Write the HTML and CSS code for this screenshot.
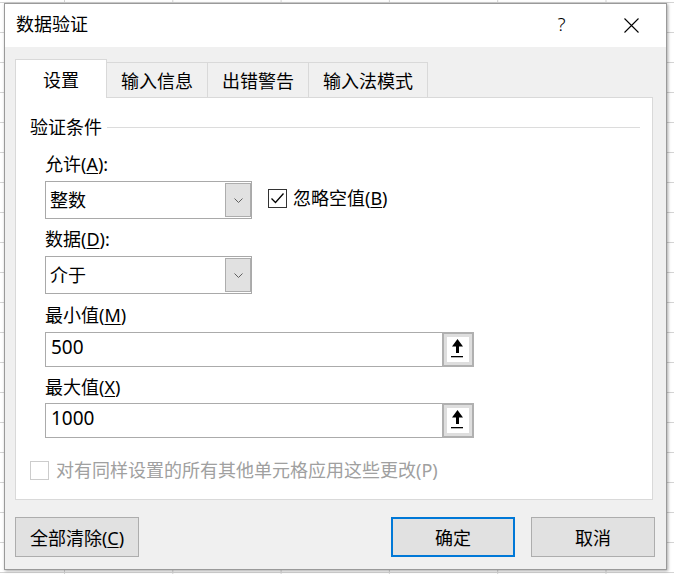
FILE: index.html
```html
<!DOCTYPE html>
<html lang="zh-CN">
<head>
  <meta charset="UTF-8" />
  <title>数据验证</title>
  <link rel="stylesheet" href="styles.css">
</head>
<body>

  <div class="dialog">
    <!-- title bar -->
    <div class="title-bar">
      <span class="title">数据验证</span>
      <span class="title-btn help">?</span>
      <span class="title-btn close">
        <svg width="15" height="15" viewBox="0 0 15 15">
          <path d="M0.5 0.5 L14.5 14.5 M14.5 0.5 L0.5 14.5" stroke="#000" stroke-width="1.1" fill="none"/>
        </svg>
      </span>
    </div>

    <div class="dialog-body">
      <div class="tabs">
        <div class="tab active">设置</div>
        <div class="tab">输入信息</div>
        <div class="tab">出错警告</div>
        <div class="tab">输入法模式</div>
      </div>

      <div class="panel">
        <div class="group-title"><span>验证条件</span></div>

        <div class="fields">
          <div class="field-label first">允许(<u>A</u>):</div>
          <div class="row">
            <div class="select">
              <span class="select-value">整数</span>
              <span class="select-btn">
                <svg width="9" height="5" viewBox="0 0 9 5"><path d="M0.5 0.5 L4.5 4.5 L8.5 0.5" stroke="#606060" fill="none"/></svg>
              </span>
            </div>
            <label class="check">
              <span class="box">
                <svg width="17" height="17" viewBox="0 0 17 17"><path d="M2.5 8.5 L6.5 12.5 L14.5 3.5" stroke="#000" stroke-width="1.3" fill="none"/></svg>
              </span>
              忽略空值(<u>B</u>)
            </label>
          </div>

          <div class="field-label">数据(<u>D</u>):</div>
          <div class="row">
            <div class="select">
              <span class="select-value">介于</span>
              <span class="select-btn">
                <svg width="9" height="5" viewBox="0 0 9 5"><path d="M0.5 0.5 L4.5 4.5 L8.5 0.5" stroke="#606060" fill="none"/></svg>
              </span>
            </div>
          </div>

          <div class="field-label min-label">最小值(<u>M</u>)</div>
          <div class="num-input">
            <span class="num-value">500</span>
            <span class="ref-btn">
              <span class="ref-inner">
                <svg width="22" height="24" viewBox="0 0 22 24">
                  <path d="M10.5 1 L16 8.5 L12 8.5 L12 15 L9 15 L9 8.5 L5 8.5 Z" fill="#000"/>
                  <rect x="4" y="18" width="12" height="1.3" fill="#000"/>
                </svg>
              </span>
            </span>
          </div>

          <div class="field-label">最大值(<u>X</u>)</div>
          <div class="num-input second">
            <span class="num-value">1000</span>
            <span class="ref-btn">
              <span class="ref-inner">
                <svg width="22" height="24" viewBox="0 0 22 24">
                  <path d="M10.5 1 L16 8.5 L12 8.5 L12 15 L9 15 L9 8.5 L5 8.5 Z" fill="#000"/>
                  <rect x="4" y="18" width="12" height="1.3" fill="#000"/>
                </svg>
              </span>
            </span>
          </div>
        </div>

        <label class="check disabled">
          <span class="box"></span>
          对有同样设置的所有其他单元格应用这些更改(P)
        </label>
      </div>

      <div class="actions">
        <button class="btn">全部清除(<u>C</u>)</button>
        <button class="btn primary">确定</button>
        <button class="btn cancel">取消</button>
      </div>
    </div>
  </div>

</body>
</html>
```

FILE: styles.css
```css
* {
  box-sizing: border-box;
  margin: 0;
  padding: 0;
}

html, body {
  width: 674px;
  height: 574px;
  overflow: hidden;
}

body {
  font-family: "Noto Sans", "Noto Sans CJK SC", sans-serif;
  font-size: 18px;
  color: #000;
  padding: 3px 0 0 4px;
  /* spreadsheet grid behind the dialog */
  background-color: #fff;
  background-image:
    linear-gradient(to right, #d4d4d4 1px, transparent 1px),
    linear-gradient(to bottom, #d4d4d4 1px, transparent 1px);
  background-size: 108.3px 30px;
  background-position: 64px 2px;
}

u {
  text-decoration: underline;
  text-underline-offset: 2px;
}

.dialog {
  width: 663px;
  height: 567px;
  border: 1px solid #9a9a9a;
  background: #f0f0f0;
  box-shadow: 1px 1px 3px rgba(0, 0, 0, 0.35);
  display: flex;
  flex-direction: column;
}

/* title bar */
.title-bar {
  height: 43px;
  flex-shrink: 0;
  background: #fff;
  display: flex;
  align-items: center;
  padding: 0 0 3px 11px;
}

.title {
  flex: 1;
  line-height: 24px;
}

.title-btn {
  width: 69px;
  height: 40px;
  display: flex;
  align-items: center;
  justify-content: center;
}

.help {
  font-weight: 300;
  font-size: 19px;
  padding-right: 2px;
}

.close {
  padding-top: 2px;
}

/* body */
.dialog-body {
  flex: 1;
  padding: 12px 11px 0 10px;
}

.tabs {
  display: flex;
  align-items: flex-end;
  height: 39px;
  margin-bottom: -1px;
  position: relative;
  z-index: 1;
}

.tab {
  height: 35px;
  margin-bottom: 1px;
  margin-left: -1px;
  padding: 6px 14px 0;
  line-height: 24px;
  border: 1px solid #d9d9d9;
  border-bottom: none;
  background: #f0f0f0;
  white-space: nowrap;
}

.tab.active {
  width: 92px;
  height: 39px;
  margin: 0;
  padding-top: 8px;
  text-align: center;
  background: #fff;
  position: relative;
  z-index: 2;
}

.panel {
  height: 403px;
  margin-right: 2px;
  background: #fff;
  border: 1px solid #d9d9d9;
  padding: 17px 12px 0 14px;
}

.group-title {
  display: flex;
  align-items: center;
  line-height: 24px;
}

.group-title::after {
  content: '';
  flex: 1;
  height: 1px;
  margin-left: 5px;
  background: #dcdcdc;
}

.fields {
  padding-left: 15px;
}

.field-label {
  line-height: 24px;
  margin-top: 8px;
}

.field-label.first {
  margin-top: 13px;
}

.field-label.min-label {
  margin-top: 9px;
}

.row {
  display: flex;
  align-items: flex-start;
  margin-top: 5px;
}

/* combo box */
.select {
  width: 207px;
  height: 38px;
  border: 1px solid #a9a9a9;
  padding: 1px 0;
  display: flex;
}

.select-value {
  flex: 1;
  padding-left: 4px;
  line-height: 34px;
}

.select-btn {
  width: 26px;
  border: 1px solid #adadad;
  background: #e1e1e1;
  display: flex;
  align-items: center;
  justify-content: center;
}

/* checkbox */
.check {
  display: flex;
  align-items: center;
  line-height: 24px;
  margin: 5px 0 0 16px;
}

.box {
  width: 19px;
  height: 19px;
  border: 1px solid #333;
  background: #fff;
  margin-right: 6px;
  display: flex;
  align-items: center;
  justify-content: center;
}

.check.disabled {
  margin: 20px 0 0;
  color: #a0a0a0;
}

.check.disabled .box {
  border-color: #cccccc;
  margin-right: 7px;
}

/* range input */
.num-input {
  width: 429px;
  height: 35px;
  margin-top: 5px;
  border: 1px solid #ababab;
  display: flex;
}

.num-input.second {
  margin-top: 4px;
}

.num-value {
  flex: 1;
  padding-left: 5px;
  line-height: 29px;
  font-size: 19px;
}

.ref-btn {
  width: 32px;
  margin: -1px -1px -1px 0;
  border: 2px solid #b0b0b0;
  background: #dedede;
  padding: 3px;
  display: flex;
}

.ref-inner {
  flex: 1;
  background: #fff;
  display: flex;
  align-items: center;
  justify-content: center;
}

/* buttons */
.actions {
  display: flex;
  margin-top: 17px;
}

.btn {
  width: 124px;
  height: 40px;
  border: 1px solid #adadad;
  background: #e1e1e1;
  font-family: inherit;
  font-size: 18px;
  color: #000;
}

.btn.primary {
  margin-left: auto;
  border: 2px solid #0078d7;
}

.btn.cancel {
  margin-left: 16px;
}
```
